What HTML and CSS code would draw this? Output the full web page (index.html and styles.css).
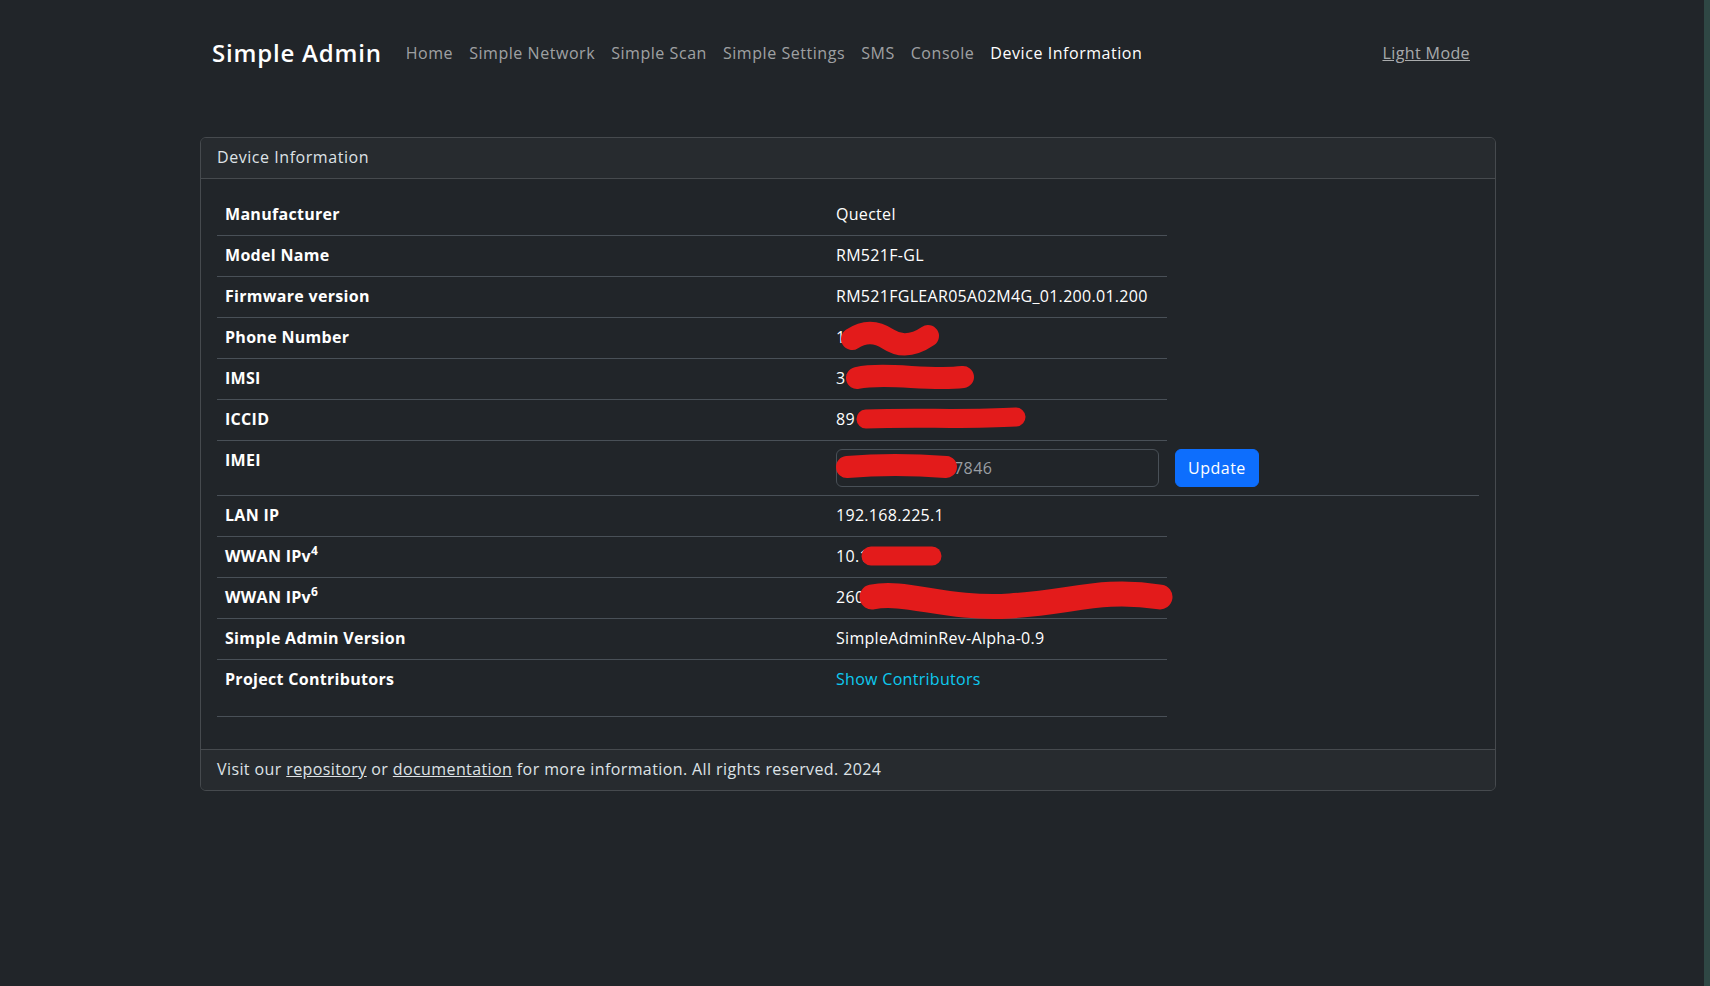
FILE: index.html
```html
<!DOCTYPE html>
<html lang="en">
<head>
<meta charset="utf-8">
<title>Simple Admin - Device Information</title>
<link rel="stylesheet" href="styles.css">
</head>
<body>
<div class="page">
  <div class="container">
    <nav class="navbar">
      <a class="brand" href="#">Simple Admin</a>
      <ul class="nav">
        <li><a class="nav-link" href="#">Home</a></li>
        <li><a class="nav-link" href="#">Simple Network</a></li>
        <li><a class="nav-link" href="#">Simple Scan</a></li>
        <li><a class="nav-link" href="#">Simple Settings</a></li>
        <li><a class="nav-link" href="#">SMS</a></li>
        <li><a class="nav-link" href="#">Console</a></li>
        <li><a class="nav-link active" href="#">Device Information</a></li>
      </ul>
      <a class="mode-link" href="#">Light Mode</a>
    </nav>

    <section class="card">
      <div class="card-header">Device Information</div>
      <div class="card-body">
        <table class="info-table">
          <colgroup>
            <col class="col-label">
            <col class="col-value">
            <col>
          </colgroup>
          <tbody>
            <tr><th>Manufacturer</th><td>Quectel</td></tr>
            <tr><th>Model Name</th><td>RM521F-GL</td></tr>
            <tr><th>Firmware version</th><td>RM521FGLEAR05A02M4G_01.200.01.200</td></tr>
            <tr><th>Phone Number</th><td><span class="redacted">1<svg class="scribble" viewBox="0 0 1 1"><path d="M16 14 Q 34 2 52 14 T 92 11"/></svg></span></td></tr>
            <tr><th>IMSI</th><td><span class="redacted">31<svg class="scribble" viewBox="0 0 1 1"><path d="M21 12 C 50 6 92 15 127 11"/></svg></span></td></tr>
            <tr><th>ICCID</th><td><span class="redacted">89<svg class="scribble thin" viewBox="0 0 1 1"><path d="M30 12 C 80 10 130 13 180 10"/></svg></span></td></tr>
            <tr class="imei-row">
              <th>IMEI</th>
              <td><span class="redacted"><input class="form-input" type="text" value="000000000007846" aria-label="IMEI"><svg class="scribble" viewBox="0 0 1 1"><path d="M11 18 Q 58 14 110 18"/></svg></span></td>
              <td><button class="btn-primary" type="button">Update</button></td>
            </tr>
            <tr><th>LAN IP</th><td>192.168.225.1</td></tr>
            <tr><th>WWAN IPv<sup>4</sup></th><td><span class="redacted">10.1<svg class="scribble thin" viewBox="0 0 1 1"><path d="M35 12 L 96 12"/></svg></span></td></tr>
            <tr><th>WWAN IPv<sup>6</sup></th><td><span class="redacted">260<svg class="scribble thick" viewBox="0 0 1 1"><path d="M36 12 C 70 5 110 25 174 21 S 264 3 324 12"/></svg></span></td></tr>
            <tr><th>Simple Admin Version</th><td>SimpleAdminRev-Alpha-0.9</td></tr>
            <tr class="last-row"><th>Project Contributors</th><td><a class="link-info" href="#">Show Contributors</a></td></tr>
          </tbody>
        </table>
      </div>
      <div class="card-footer">
        Visit our <a href="#">repository</a> or <a href="#">documentation</a> for more information. All rights reserved. 2024
      </div>
    </section>
  </div>
</div>
<div class="edge"><div class="edge-bar"></div></div>
</body>
</html>
```

FILE: styles.css
```css
html, body {
  height: 100%;
}

body {
  margin: 0;
  display: flex;
  background: #212529;
  color: #dee2e6;
  font-family: "Open Sans", "Liberation Sans", sans-serif;
  font-size: 16px;
  line-height: 24px;
  letter-spacing: 0.3px;
}

.page {
  flex: 1;
  min-width: 0;
}

.edge {
  width: 14px;
  display: flex;
  justify-content: flex-end;
}

.edge-bar {
  width: 6px;
  background: #2f4744;
}

.container {
  max-width: 1296px;
  margin: 0 auto;
  padding: 0 12px;
}

/* Navbar */
.navbar {
  display: flex;
  align-items: center;
  height: 56px;
  margin-top: 25px;
  padding: 0 26px 0 12px;
}

.brand {
  color: #fff;
  text-decoration: none;
  font-size: 24px;
  font-weight: 600;
  line-height: 40px;
  letter-spacing: 0.8px;
  margin-right: 16px;
}

.nav {
  display: flex;
  list-style: none;
  margin: 0;
  padding: 0;
}

.nav-link {
  display: block;
  padding: 8px;
  color: rgba(255, 255, 255, 0.58);
  text-decoration: none;
  letter-spacing: 0.55px;
}

.nav-link.active {
  color: #fff;
}

.mode-link {
  margin-left: auto;
  padding: 8px 0;
  color: rgba(255, 255, 255, 0.62);
  text-decoration: underline;
  letter-spacing: 0.4px;
}

/* Card */
.card {
  margin-top: 56px;
  border: 1px solid #464a4e;
  border-radius: 6px;
  overflow: hidden;
}

.card-header {
  padding: 7px 16px 9px;
  background: #272b2f;
  border-bottom: 1px solid #464a4e;
  letter-spacing: 0.55px;
}

.card-body {
  padding: 16px;
}

.card-footer {
  padding: 7px 16px 9px;
  background: #272b2f;
  border-top: 1px solid #464a4e;
  letter-spacing: 0.4px;
}

.card-footer a {
  color: #dee2e6;
}

/* Table */
.info-table {
  width: 100%;
  table-layout: fixed;
  border-collapse: collapse;
  margin-bottom: 16px;
  color: #fff;
}

.col-label {
  width: 611px;
}

.col-value {
  width: 339px;
}

.info-table th,
.info-table td {
  padding: 7px 8px 9px;
  text-align: left;
  vertical-align: top;
  border-bottom: 1px solid #495057;
  white-space: nowrap;
}

.info-table th {
  font-weight: 700;
}

.info-table sup {
  font-size: 12px;
  line-height: 0;
  position: relative;
  top: -1px;
}

.imei-row td {
  padding-top: 8px;
  padding-bottom: 8px;
}

.last-row th,
.last-row td {
  padding-bottom: 25px;
}

.link-info {
  color: #0dcaf0;
  text-decoration: none;
}

.redacted {
  position: relative;
  display: block;
}

.scribble {
  position: absolute;
  left: 0;
  top: 0;
  width: 1px;
  height: 1px;
  overflow: visible;
}

.scribble path {
  fill: none;
  stroke: #e31b1b;
  stroke-width: 22;
  stroke-linecap: round;
  stroke-linejoin: round;
}

.scribble.thin path {
  stroke-width: 19;
}

.scribble.thick path {
  stroke-width: 25;
}

.form-input {
  display: block;
  box-sizing: border-box;
  width: 100%;
  height: 38px;
  padding: 6px 12px;
  background: #212529;
  border: 1px solid #495057;
  border-radius: 6px;
  color: #9a9ea3;
  font: inherit;
  letter-spacing: 0.4px;
}

.btn-primary {
  height: 38px;
  padding: 6px 12px;
  background: #0d6efd;
  color: #fff;
  border: 1px solid #0d6efd;
  border-radius: 6px;
  font: inherit;
  letter-spacing: 0.5px;
  line-height: 24px;
}
```
